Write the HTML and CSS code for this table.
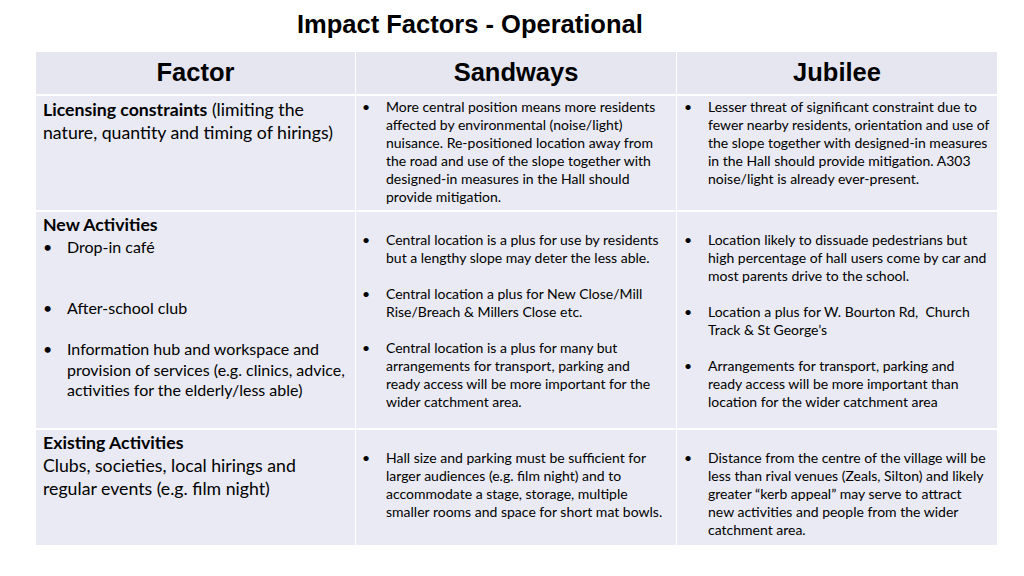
FILE: index.html
```html
<!DOCTYPE html>
<html>
<head>
<meta charset="utf-8">
<link rel="stylesheet" href="styles.css">
</head>
<body>
<div class="page">
  <h1 class="title">Impact Factors - Operational</h1>
  <div class="grid">
    <div class="cell head">Factor</div>
    <div class="cell head">Sandways</div>
    <div class="cell head">Jubilee</div>

    <div class="cell factor r1">
      <p><b>Licensing constraints</b> (limiting the<br>nature, quantity and timing of hirings)</p>
    </div>
    <div class="cell notes r1">
      <ul>
        <li>More central position means more residents<br>affected by environmental (noise/light)<br>nuisance. Re-positioned location away from<br>the road and use of the slope together with<br>designed-in measures in the Hall should<br>provide mitigation.</li>
      </ul>
    </div>
    <div class="cell notes r1 c3">
      <ul>
        <li>Lesser threat of significant constraint due to<br>fewer nearby residents, orientation and use of<br>the slope together with designed-in measures<br>in the Hall should provide mitigation. A303<br>noise/light is already ever-present.</li>
      </ul>
    </div>

    <div class="cell factor r2">
      <p class="fh"><b>New Activities</b></p>
      <ul class="flist">
        <li class="f1">Drop-in café</li>
        <li class="f2">After-school club</li>
        <li class="f3">Information hub and workspace and<br>provision of services (e.g. clinics, advice,<br>activities for the elderly/less able)</li>
      </ul>
    </div>
    <div class="cell notes r2 gap">
      <ul>
        <li>Central location is a plus for use by residents<br>but a lengthy slope may deter the less able.</li>
        <li>Central location a plus for New Close/Mill<br>Rise/Breach &amp; Millers Close etc.</li>
        <li>Central location is a plus for many but<br>arrangements for transport, parking and<br>ready access will be more important for the<br>wider catchment area.</li>
      </ul>
    </div>
    <div class="cell notes r2 gap c3">
      <ul>
        <li>Location likely to dissuade pedestrians but<br>high percentage of hall users come by car and<br>most parents drive to the school.</li>
        <li>Location a plus for W. Bourton Rd,&nbsp; Church<br>Track &amp; St George’s</li>
        <li>Arrangements for transport, parking and<br>ready access will be more important than<br>location for the wider catchment area</li>
      </ul>
    </div>

    <div class="cell factor r3">
      <p><b>Existing Activities</b><br>Clubs, societies, local hirings and<br>regular events (e.g. film night)</p>
    </div>
    <div class="cell notes r3 gap">
      <ul>
        <li>Hall size and parking must be sufficient for<br>larger audiences (e.g. film night) and to<br>accommodate a stage, storage, multiple<br>smaller rooms and space for short mat bowls.</li>
      </ul>
    </div>
    <div class="cell notes r3 gap c3">
      <ul>
        <li>Distance from the centre of the village will be<br>less than rival venues (Zeals, Silton) and likely<br>greater “kerb appeal” may serve to attract<br>new activities and people from the wider<br>catchment area.</li>
      </ul>
    </div>
  </div>
</div>
</body>
</html>
```

FILE: styles.css
```css
* { box-sizing: border-box; }
html, body { margin: 0; padding: 0; background: #ffffff; }
.page {
  width: 1024px;
  height: 576px;
  padding: 8px 0 0 36px;
  color: #000;
}
.title {
  margin: 0 0 0 261px;
  font-family: "Liberation Sans", Arial, sans-serif;
  font-weight: bold;
  font-size: 25.5px;
  line-height: 32px;
  height: 44px;
}
.grid {
  display: grid;
  grid-template-columns: 319px 320px 320px;
  grid-template-rows: 42px 114px 216px 115px;
  column-gap: 1px;
  row-gap: 2px;
  width: 961px;
  background: #ffffff;
}
.cell {
  background: #e9eaf3;
  font-family: Lato, "Liberation Sans", sans-serif;
  white-space: nowrap;
}
.head {
  background: #e5e6f0;
  font-family: "Liberation Sans", Arial, sans-serif;
  font-weight: bold;
  font-size: 25.5px;
  display: flex;
  align-items: center;
  justify-content: center;
  padding-bottom: 2px;
}
.factor {
  padding: 2px 0 0 7px;
  font-size: 17.7px;
  line-height: 23px;
}
.factor.r2 { padding-top: 3px; }
.factor.r3 { padding-top: 1px; }
.factor p { margin: 0; }
.factor b { font-weight: bold; }
.fh { line-height: 20px; }
.flist { list-style: none; margin: 0; padding: 0; }
.flist li {
  font-size: 16px;
  padding-left: 24px;
  text-indent: -24px;
  line-height: 20.5px;
}
.flist li::before {
  content: "•";
  display: inline-block;
  width: 24px;
  text-indent: 0;
}
.flist .f1 { margin-top: 2px; }
.flist .f2 { margin-top: 40.5px; }
.flist .f3 { margin-top: 20.5px; }
.notes {
  padding: 2px 0 0 9px;
  font-size: 14px;
  line-height: 18px;
}
.notes.c3 { padding-left: 10px; }
.notes.gap { padding-top: 19px; }
.notes ul { list-style: none; margin: 0; padding: 0; }
.notes li {
  padding-left: 21px;
  text-indent: -24px;
  margin-bottom: 18px;
}
.notes li::before {
  content: "•";
  display: inline-block;
  width: 24px;
  text-indent: 0;
}
```
